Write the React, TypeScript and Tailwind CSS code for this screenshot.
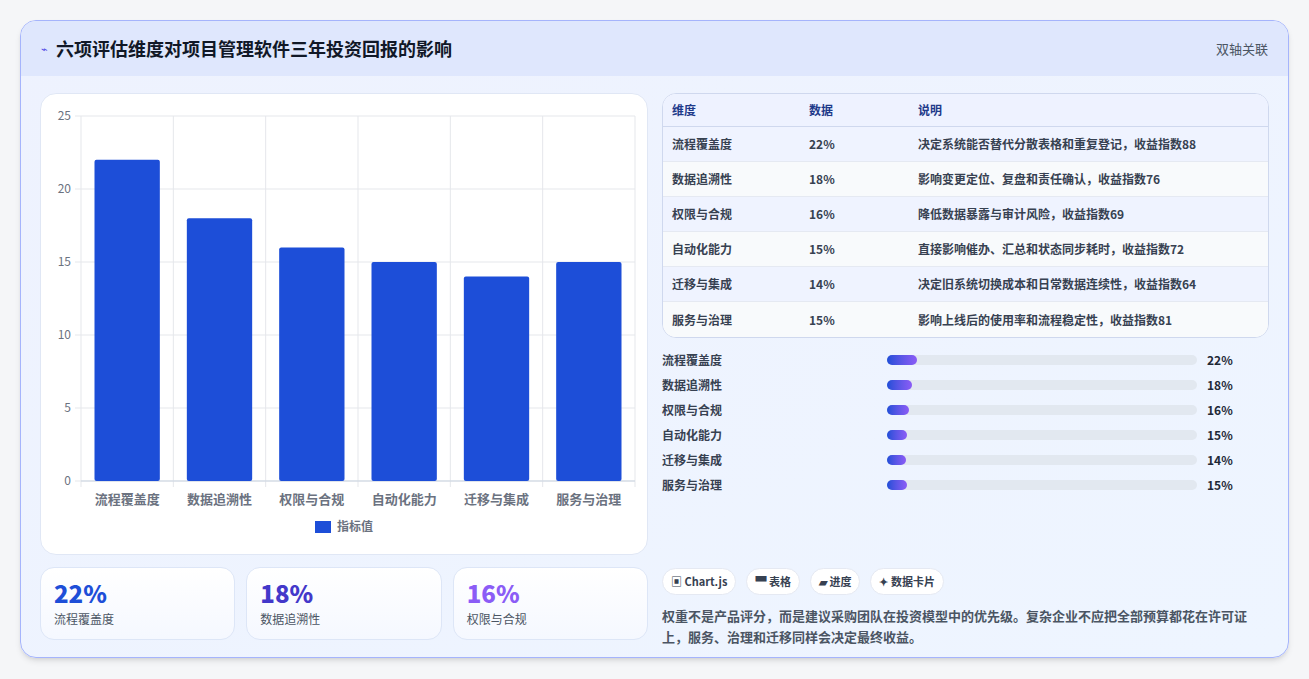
import React from "react";

const data = [
  { n: "流程覆盖度", v: 22, d: "决定系统能否替代分散表格和重复登记，收益指数88" },
  { n: "数据追溯性", v: 18, d: "影响变更定位、复盘和责任确认，收益指数76" },
  { n: "权限与合规", v: 16, d: "降低数据暴露与审计风险，收益指数69" },
  { n: "自动化能力", v: 15, d: "直接影响催办、汇总和状态同步耗时，收益指数72" },
  { n: "迁移与集成", v: 14, d: "决定旧系统切换成本和日常数据连续性，收益指数64" },
  { n: "服务与治理", v: 15, d: "影响上线后的使用率和流程稳定性，收益指数81" },
];

function Chart() {
  const L = 40, T = 22, W = 554, H = 365;
  const cw = W / 6;
  return (
    <svg width="606" height="460" className="block">
      {[0, 5, 10, 15, 20, 25].map((t) => {
        const y = T + H - (t / 25) * H;
        return (
          <g key={t}>
            <line x1={L - 6} x2={L + W} y1={y} y2={y} stroke="#e5e7eb" />
            <text x={L - 10} y={y + 4} textAnchor="end" fontSize="12" fill="#6b7280">{t}</text>
          </g>
        );
      })}
      {Array.from({ length: 7 }).map((_, i) => (
        <line key={i} x1={L + i * cw} x2={L + i * cw} y1={T} y2={T + H + 6} stroke="#e5e7eb" />
      ))}
      <line x1={L} x2={L + W} y1={T + H} y2={T + H} stroke="#cbd5e1" />
      {data.map((d, i) => {
        const h = (d.v / 25) * H;
        return (
          <g key={d.n}>
            <rect x={L + i * cw + 13.5} y={T + H - h} width={cw - 27} height={h} rx="2" fill="#1d4ed8" />
            <text x={L + i * cw + cw / 2} y={T + H + 23} textAnchor="middle" fontSize="13" fontWeight="600" fill="#6b7280">{d.n}</text>
          </g>
        );
      })}
      <rect x="274" y="427" width="16" height="12" fill="#1d4ed8" />
      <text x="296" y="437" fontSize="12" fontWeight="600" fill="#6b7280">指标值</text>
    </svg>
  );
}

export default function App() {
  return (
    <div className="w-[1309px] h-[679px] bg-[#f5f6f8] pt-[20px] px-[20px]" style={{ fontFamily: '"Noto Sans CJK SC", "Noto Sans", sans-serif' }}>
      <div className="w-[1269px] h-[638px] rounded-[16px] border border-[#a5b4fc] overflow-hidden bg-gradient-to-br from-[#eef2fe] to-[#eef5ff] shadow-md">
        <div className="h-[55px] bg-[#dfe7fd] flex items-center justify-between px-[20px]">
          <div className="flex items-center gap-[8px]">
            <span className="text-[#4f46e5] text-[11px]">⌁</span>
            <span className="text-[18px] font-bold text-[#111827]">六项评估维度对项目管理软件三年投资回报的影响</span>
          </div>
          <span className="text-[13px] text-[#4b5563]">双轴关联</span>
        </div>
        <div className="flex gap-[14px] px-[19px] pt-[17px]">
          <div className="w-[609px] flex flex-col gap-[12px]">
            <div className="h-[462px] bg-white rounded-[16px] border border-[#e0e7f5]">
              <Chart />
            </div>
            <div className="grid grid-cols-3 gap-[11px]">
              {[["22%", "#1d4ed8", "流程覆盖度"], ["18%", "#4338ca", "数据追溯性"], ["16%", "#8b5cf6", "权限与合规"]].map(([v, c, n]) => (
                <div key={n} className="h-[73px] rounded-[14px] border border-[#dde6f7] bg-gradient-to-b from-white to-[#f5f8ff] px-[13px] pt-[10px]">
                  <div className="text-[24px] font-extrabold leading-[30px]" style={{ color: c }}>{v}</div>
                  <div className="text-[12px] text-[#4b5563] mt-[2px]">{n}</div>
                </div>
              ))}
            </div>
          </div>
          <div className="w-[608px] flex flex-col">
            <div className="rounded-[14px] border border-[#cfd8ee] overflow-hidden bg-white">
              <div className="h-[33px] flex items-center bg-[#eef2ff] border-b border-[#cfd8ee] text-[12px] font-semibold text-[#1e3a8a]">
                <div className="w-[146px] pl-[9px]">维度</div>
                <div className="w-[109px]">数据</div>
                <div>说明</div>
              </div>
              {data.map((d, i) => (
                <div key={d.n} className={`h-[35px] flex items-center text-[12px] text-[#374151] ${i % 2 === 0 ? "bg-[#eff3ff]" : "bg-[#f8fafc]"} ${i < 5 ? "border-b border-[#e5e9f2]" : ""}`}>
                  <div className="w-[146px] pl-[9px] font-semibold">{d.n}</div>
                  <div className="w-[109px] font-semibold">{d.v}%</div>
                  <div className="font-semibold">{d.d}</div>
                </div>
              ))}
            </div>
            <div className="mt-[9px] flex flex-col">
              {data.map((d) => (
                <div key={d.n} className="h-[25px] flex items-center text-[12px] font-semibold text-[#374151]">
                  <div className="w-[225px]">{d.n}</div>
                  <div className="w-[310px] h-[10px] rounded-full bg-[#e2e8f0]">
                    <div className="h-[10px] rounded-full bg-gradient-to-r from-[#1d4ed8] to-[#8b5cf6]" style={{ width: `${d.v * 0.44}%` }} />
                  </div>
                  <div className="ml-[10px] text-[#1f2937] font-bold">{d.v}%</div>
                </div>
              ))}
            </div>
            <div className="mt-[71px] flex gap-[10px]">
              {["▣ Chart.js", "▀ 表格", "▰ 进度", "✦ 数据卡片"].map((t) => (
                <span key={t} className="h-[27px] px-[8px] flex items-center rounded-full bg-white border border-[#e5e9f2] text-[11px] font-bold text-[#374151]">{t}</span>
              ))}
            </div>
            <p className="mt-[10px] text-[13px] leading-[21px] text-[#4b5563] font-semibold">
              权重不是产品评分，而是建议采购团队在投资模型中的优先级。复杂企业不应把全部预算都花在许可证上，服务、治理和迁移同样会决定最终收益。
            </p>
          </div>
        </div>
      </div>
    </div>
  );
}
